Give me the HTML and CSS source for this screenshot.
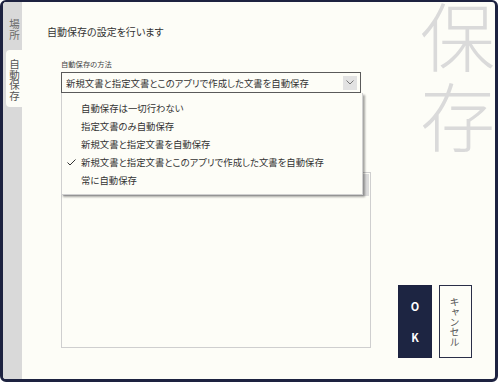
FILE: index.html
```html
<!DOCTYPE html>
<html lang="ja">
<head>
  <meta charset="UTF-8" />
  <title>自動保存</title>
  <link rel="stylesheet" href="styles.css">
</head>
<body>
  <div class="frame">
    <!-- 左のタブ -->
    <div class="tabs">
      <div class="tab">場所</div>
      <div class="tab active">自動保存</div>
    </div>

    <div class="main">
      <div class="watermark">保存</div>
      <div class="title">自動保存の設定を行います</div>

      <div class="body">
        <div class="form">
          <div class="label">自動保存の方法</div>
          <div class="select-wrap">
            <div class="select">
              <span>新規文書と指定文書とこのアプリで作成した文書を自動保存</span>
              <span class="arrow">
                <svg width="8" height="5" viewBox="0 0 8 5"><path d="M0.5 0.5 L4 4 L7.5 0.5" fill="none" stroke="#777" stroke-width="1"/></svg>
              </span>
            </div>
            <!-- 開いているドロップダウン -->
            <div class="dropdown">
              <div class="item">自動保存は一切行わない</div>
              <div class="item">指定文書のみ自動保存</div>
              <div class="item">新規文書と指定文書を自動保存</div>
              <div class="item checked">
                <svg class="check" width="9" height="7" viewBox="0 0 9 7"><path d="M0.5 3.5 L3 6 L8.5 0.5" fill="none" stroke="#333" stroke-width="1"/></svg>
                新規文書と指定文書とこのアプリで作成した文書を自動保存
              </div>
              <div class="item">常に自動保存</div>
            </div>
          </div>
          <div class="listbox">
            <div class="listbox-head"></div>
          </div>
        </div>

        <div class="actions">
          <button class="btn ok"><span>O</span><span>K</span></button>
          <button class="btn cancel">キャンセル</button>
        </div>
      </div>
    </div>
  </div>
</body>
</html>
```

FILE: styles.css
```css
body {
  margin: 0;
  background: #fff;
  font-family: "Noto Sans CJK JP", "Noto Sans", sans-serif;
  font-feature-settings: "palt";
  overflow: hidden;
}
.frame {
  width: 498px;
  height: 382px;
  box-sizing: border-box;
  border: 3px solid #1d2240;
  border-top-width: 2px;
  border-radius: 6px;
  background: #fdfdf7;
  display: flex;
  overflow: hidden;
}
.tabs {
  width: 19px;
  background: #d9d9d9;
  display: flex;
  flex-direction: column;
  align-items: flex-end;
  padding-top: 16px;
}
.tab {
  writing-mode: vertical-rl;
  text-orientation: upright;
  font-size: 10.5px;
  line-height: 16px;
  color: #6a6a6a;
  width: 16px;
  display: flex;
  align-items: center;
  padding: 1px 0;
  font-feature-settings: normal;
}
.tab.active {
  background: #fdfdf7;
  margin-top: 9px;
  padding: 9px 0 6px;
  border-radius: 4px 0 0 4px;
  color: #555;
}
.main {
  flex: 1;
  position: relative;
  padding: 22px 0 0 25px;
}
.watermark {
  position: absolute;
  top: -2px;
  right: 0;
  writing-mode: vertical-rl;
  text-orientation: upright;
  font-size: 75px;
  line-height: 75px;
  letter-spacing: 5px;
  font-weight: 300;
  color: #dadada;
  font-feature-settings: normal;
}
.title {
  font-size: 10px;
  line-height: 16px;
  color: #333;
}
.body {
  display: flex;
  margin-top: 18px;
}
.form {
  margin-left: 14px;
  width: 310px;
}
.label {
  font-size: 7.3px;
  line-height: 12px;
  color: #444;
}
.select-wrap {
  position: relative;
  margin-top: 2px;
  width: 300px;
}
.select {
  height: 21px;
  box-sizing: border-box;
  border: 1px solid #5a5a5a;
  display: flex;
  align-items: center;
  justify-content: space-between;
  padding: 0 3px 0 4px;
  font-size: 9.4px;
  color: #333;
  background: #fdfdf7;
  white-space: nowrap;
}
.arrow {
  width: 14px;
  height: 14px;
  background: #e2e2e2;
  display: flex;
  align-items: center;
  justify-content: center;
}
.dropdown {
  position: absolute;
  top: 100%;
  left: 0;
  width: 302px;
  box-sizing: border-box;
  padding: 6px 0 5px;
  background: #fdfdf7;
  border: 1px solid #d0d0d0;
  border-top: none;
  box-shadow: 2px 2px 2px rgba(0,0,0,0.35);
  z-index: 2;
}
.item {
  position: relative;
  font-size: 9.4px;
  line-height: 18px;
  color: #333;
  padding-left: 19px;
  white-space: nowrap;
}
.check {
  position: absolute;
  left: 5px;
  top: 6px;
}
.listbox {
  margin-top: 79px;
  height: 176px;
  box-sizing: border-box;
  border: 1px solid #cfcfcf;
  padding: 1px;
}
.listbox-head {
  height: 22px;
  background: #dcdcdc;
}
.actions {
  display: flex;
  gap: 7px;
  align-self: flex-end;
  margin-left: 27px;
  margin-bottom: -10px;
}
.btn {
  width: 34px;
  height: 73px;
  box-sizing: border-box;
  border: 1px solid #1d2240;
  font-family: inherit;
  padding: 0;
  cursor: pointer;
}
.btn.ok {
  background: #1d2542;
  color: #fff;
  font-size: 11px;
  font-weight: bold;
  display: flex;
  flex-direction: column;
  align-items: center;
  justify-content: center;
  gap: 15px;
}
.btn.cancel {
  width: 33px;
  background: #fdfdf7;
  border-color: #2a2f48;
  color: #555;
  font-size: 10px;
  writing-mode: vertical-rl;
  text-orientation: upright;
  line-height: 33px;
  text-align: center;
  font-feature-settings: normal;
}
```
